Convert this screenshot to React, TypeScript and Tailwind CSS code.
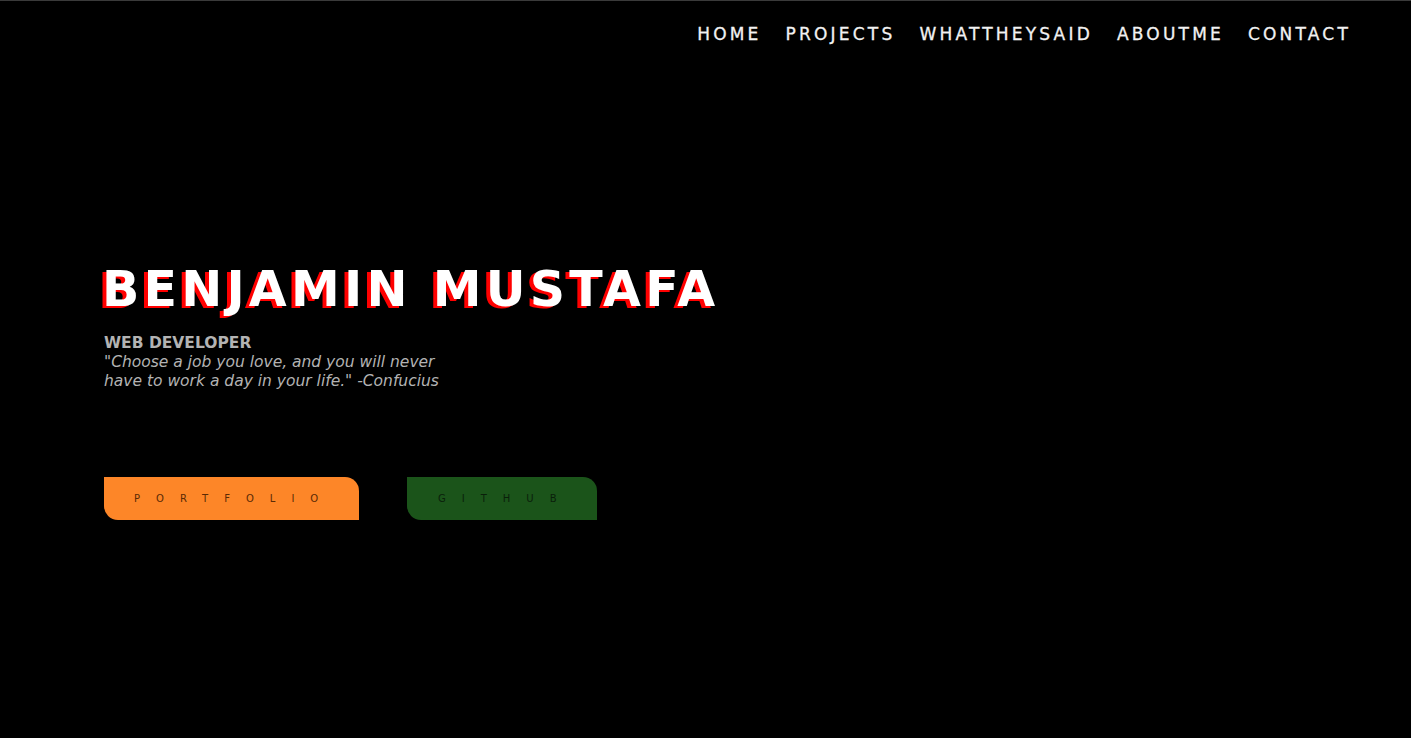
export default function App() {
  const font = { fontFamily: '"DejaVu Sans", "Open Sans", sans-serif' }
  return (
    <div className="min-h-[738px] bg-black border-t border-[#3a3a3a] text-white" style={font}>
      {/* Nav */}
      <nav className="flex justify-end pr-[60px] pt-[21px]">
        <ul className="flex gap-[24px] text-[17px] tracking-[3.2px] text-[#f2f2f2] [-webkit-text-stroke:0.3px_#f2f2f2]">
          <li>HOME</li>
          <li>PROJECTS</li>
          <li>WHATTHEYSAID</li>
          <li>ABOUTME</li>
          <li>CONTACT</li>
        </ul>
      </nav>

      {/* Hero */}
      <section className="pl-[104px] pt-[214px]">
        <h1 className="-ml-[2px] text-[49px] leading-[56px] font-bold tracking-[4.2px] text-white [text-shadow:-4px_2px_0_#ff0000]">
          BENJAMIN MUSTAFA
        </h1>
        <div className="mt-[16px] text-[#b3b3b3]">
          <p className="text-[15.5px] leading-[19px] font-bold">WEB DEVELOPER</p>
          <p className="w-[370px] text-[15.5px] leading-[19px] italic">
            "Choose a job you love, and you will never have to work a day in your life." -Confucius
          </p>
        </div>

        <div className="mt-[86px] flex gap-[48px]">
          <button className="w-[255px] h-[43px] bg-[#fd8628] rounded-tr-[14px] rounded-bl-[14px] text-[10px] tracking-[16px] text-[#5a2a05] text-left pl-[30px]">
            PORTFOLIO
          </button>
          <button className="w-[190px] h-[43px] bg-[#1b541a] rounded-tr-[14px] rounded-bl-[14px] text-[10px] tracking-[16px] text-[#0a1f0a] text-left pl-[31px]">
            GITHUB
          </button>
        </div>
      </section>
    </div>
  )
}
